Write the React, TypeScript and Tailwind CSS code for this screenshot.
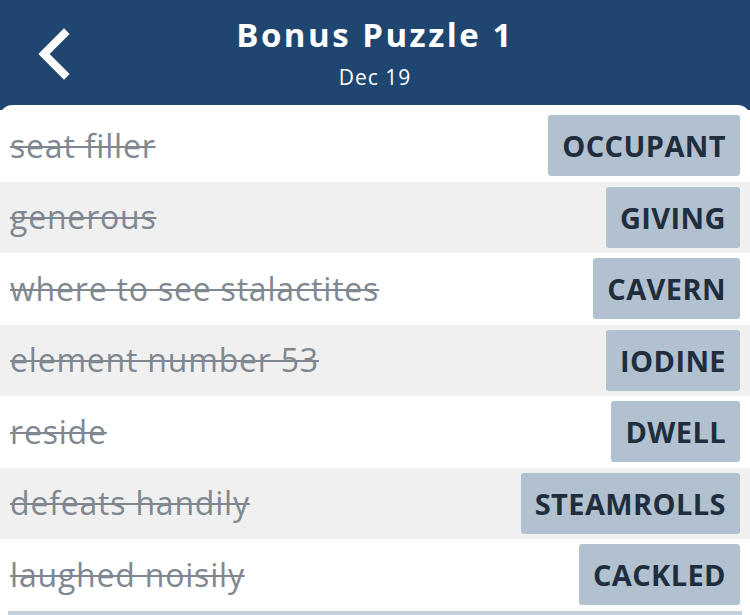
const clues = [
  { clue: "seat filler", answer: "OCCUPANT" },
  { clue: "generous", answer: "GIVING" },
  { clue: "where to see stalactites", answer: "CAVERN" },
  { clue: "element number 53", answer: "IODINE" },
  { clue: "reside", answer: "DWELL" },
  { clue: "defeats handily", answer: "STEAMROLLS" },
  { clue: "laughed noisily", answer: "CACKLED" },
];

const App = () => {
  return (
    <div className="h-[615px] w-[750px] overflow-hidden bg-[#1f4571] font-['Open_Sans',sans-serif]">
      <header className="relative flex h-[105px] flex-col items-center pt-[12px] text-white">
        <svg
          className="absolute left-[34px] top-[28px] h-[52px] w-[38px]"
          viewBox="0 0 38 52"
          fill="none"
          stroke="white"
          strokeWidth={8}
          strokeLinecap="square"
        >
          <polyline points="30,6 10,26 30,46" />
        </svg>
        <h1 className="text-[33px] font-bold leading-[46px] tracking-[2.5px]">Bonus Puzzle 1</h1>
        <p className="mt-[5px] text-[21px] leading-[28px] tracking-[1px]">Dec 19</p>
      </header>
      <main className="rounded-t-[12px] bg-white pt-[5px]">
        {clues.map((c, i) => (
          <div
            key={c.answer}
            className={`flex h-[71.5px] items-center justify-between pl-[10px] pr-[10px] ${
              i % 2 === 1 ? "bg-[#f0f0f0]" : "bg-white"
            }`}
          >
            <span className="text-[32px] tracking-[0.8px] text-[#7f8891] line-through decoration-[2px]">
              {c.clue}
            </span>
            <span className="flex h-[61px] items-center rounded-[3px] bg-[#b1c1d0] px-[14px] text-[29px] font-bold tracking-[0.4px] text-[#1f2d3d]">
              {c.answer}
            </span>
          </div>
        ))}
        <div className="mx-[8px] h-[4px] bg-[#c3cfda]" />
      </main>
    </div>
  );
};

export default App;
